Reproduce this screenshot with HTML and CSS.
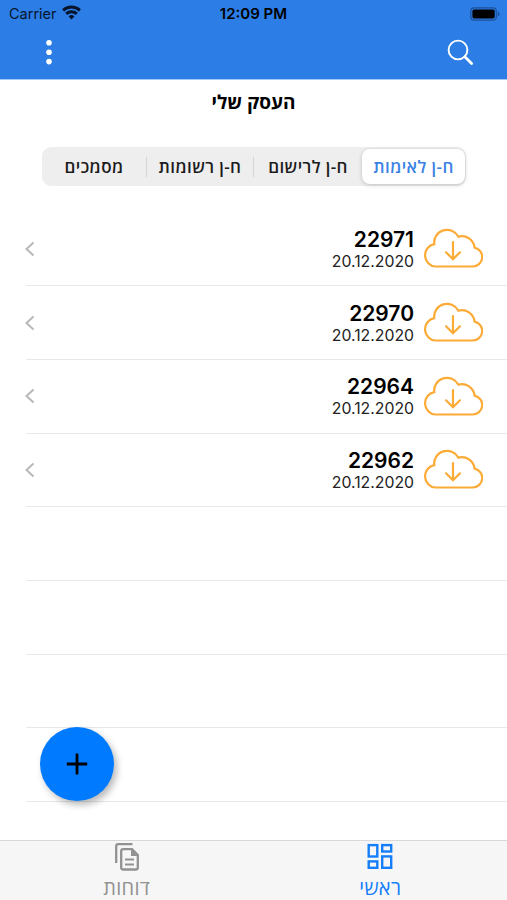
FILE: index.html
```
<!DOCTYPE html>
<html lang="he">
<head>
  <meta charset="UTF-8" />
  <meta name="viewport" content="width=device-width, initial-scale=1.0"/>
  <title>העסק שלי</title>
  <link rel="stylesheet" href="styles.css">
</head>
<body>
  <svg width="0" height="0" class="defs">
    <symbol id="cloud" viewBox="0 0 60 41">
      <path d="M12.5 38.5 A11.25 11.25 0 0 1 11.3 16.2 A12.8 12.8 0 0 1 35.3 8.6 A12.9 12.9 0 0 1 51.6 19.6 A9.55 9.55 0 0 1 49.5 38.5 Z"/>
      <path d="M30 14 V31 M23 24.3 L30 31.2 L37 24.3"/>
    </symbol>
    <symbol id="chevron" viewBox="0 0 10 16">
      <path d="M8.5 1.5 L1.5 8 L8.5 14.5"/>
    </symbol>
  </svg>

  <header>
    <div class="status">
      <div class="carrier">
        <span>Carrier</span>
        <svg width="19" height="15" viewBox="0 0 19 15" fill="none" stroke="#06152c" stroke-width="2.9">
          <path d="M1.1 5.4 A12.2 12.2 0 0 1 17.9 5.4"/>
          <path d="M4.2 8.9 A7.8 7.8 0 0 1 14.8 8.9"/>
          <path d="M9.5 14.4 L6.6 11.4 A4.2 4.2 0 0 1 12.4 11.4 Z" fill="#06152c" stroke="none"/>
        </svg>
      </div>
      <div class="time">12:09 PM</div>
      <svg class="battery" width="31" height="14" viewBox="0 0 31 14">
        <rect x="0.8" y="0.8" width="25.5" height="12.4" rx="3.5" fill="none" stroke="#1c509a" stroke-width="1.2"/>
        <rect x="2.4" y="2.4" width="22.3" height="9.2" rx="1.8" fill="#000"/>
        <path d="M27.8 4.6 Q29.6 5.4 29.6 7 Q29.6 8.6 27.8 9.4 Z" fill="#1c509a"/>
      </svg>
    </div>
    <div class="nav">
      <svg width="8" height="26" viewBox="0 0 8 26" fill="#fff">
        <circle cx="4" cy="3.7" r="2.8"/>
        <circle cx="4" cy="13.2" r="2.8"/>
        <circle cx="4" cy="22.6" r="2.8"/>
      </svg>
      <svg width="27" height="27" viewBox="0 0 27 27" fill="none" stroke="#fff">
        <circle cx="11" cy="11" r="9.4" stroke-width="1.9"/>
        <path d="M17.8 17.8 L24.6 24.4" stroke-width="2.8" stroke-linecap="round"/>
      </svg>
    </div>
  </header>

  <main>
    <h1 dir="rtl">העסק שלי</h1>
    <div class="tabs" dir="rtl">
      <button class="active"><span>ח-ן לאימות</span></button>
      <button><span>ח-ן לרישום</span></button>
      <button><span>ח-ן רשומות</span></button>
      <button><span>מסמכים</span></button>
    </div>

    <div class="list">
      <div class="row">
        <svg class="chevron"><use href="#chevron"/></svg>
        <div class="info"><b>22971</b><span>20.12.2020</span></div>
        <svg class="cloud"><use href="#cloud"/></svg>
      </div>
      <div class="row">
        <svg class="chevron"><use href="#chevron"/></svg>
        <div class="info"><b>22970</b><span>20.12.2020</span></div>
        <svg class="cloud"><use href="#cloud"/></svg>
      </div>
      <div class="row">
        <svg class="chevron"><use href="#chevron"/></svg>
        <div class="info"><b>22964</b><span>20.12.2020</span></div>
        <svg class="cloud"><use href="#cloud"/></svg>
      </div>
      <div class="row">
        <svg class="chevron"><use href="#chevron"/></svg>
        <div class="info"><b>22962</b><span>20.12.2020</span></div>
        <svg class="cloud"><use href="#cloud"/></svg>
      </div>
      <div class="row"></div>
      <div class="row"></div>
      <div class="row"></div>
      <div class="row"></div>
    </div>
  </main>

  <button class="add">
    <svg width="22" height="22" viewBox="0 0 22 22" stroke="#000" stroke-width="2.8">
      <path d="M11 0.5 V21.5 M0.8 11 H21.2"/>
    </svg>
  </button>

  <footer>
    <div class="item">
      <svg width="26" height="30" viewBox="0 0 26 30" fill="none" stroke="#929292" stroke-width="2.3">
        <path d="M2.2 21 V4.2 Q2.2 2.2 4.2 2.2 H18.5"/>
        <path d="M9.2 7.2 H18 L23.8 13 V25.5 Q23.8 27.5 21.8 27.5 H9.2 Q7.2 27.5 7.2 25.5 V9.2 Q7.2 7.2 9.2 7.2 Z"/>
        <path d="M17 7 L24 14 H17 Z" fill="#929292" stroke="none"/>
        <path d="M11 17.4 H20 M11 22.4 H20" stroke-width="2"/>
      </svg>
      <span>דוחות</span>
    </div>
    <div class="item active">
      <svg width="26" height="30" viewBox="0 0 26 30" fill="none" stroke="#157efb" stroke-width="2.4">
        <rect x="1.7" y="3.1" width="8.6" height="11.4"/>
        <rect x="15.2" y="3.1" width="9" height="6.4"/>
        <rect x="1.7" y="19.4" width="8.6" height="6.4"/>
        <rect x="15.2" y="14.4" width="9" height="11.4"/>
      </svg>
      <span>ראשי</span>
    </div>
  </footer>
</body>
</html>
```
FILE: styles.css
```
* {
  box-sizing: border-box;
}

body {
  margin: 0;
  height: 900px;
  display: flex;
  flex-direction: column;
  font-family: Inter, "Open Sans", sans-serif;
  background: #fff;
  color: #000;
  overflow: hidden;
}

button {
  border: none;
  padding: 0;
  background: none;
  font-family: "Open Sans", sans-serif;
}

svg {
  display: block;
}

.defs {
  position: absolute;
}

header {
  height: 80px;
  background: #2c7de5;
  border-bottom: 1px solid #a3c8f6;
}

.status {
  display: grid;
  grid-template-columns: 1fr auto 1fr;
  align-items: center;
  height: 27px;
  padding: 0 6px 0 9px;
  font-size: 14.5px;
}

.carrier {
  display: flex;
  align-items: center;
  gap: 5px;
  color: #06152c;
}

.carrier svg {
  margin-top: -3px;
}

.time {
  font-weight: 600;
  font-size: 15px;
  margin-right: 3px;
}

.battery {
  justify-self: end;
}

.nav {
  display: flex;
  justify-content: space-between;
  align-items: center;
  height: 50px;
  padding: 0 33px 0 45px;
}

main {
  flex: 1;
}

h1 {
  margin: 9px 0 0;
  height: 26px;
  line-height: 26px;
  font-family: "Open Sans", sans-serif;
  font-size: 19px;
  font-weight: 700;
  text-align: center;
}

.tabs {
  display: grid;
  grid-template-columns: 104px 108px 107px 105px;
  width: 424px;
  height: 39px;
  margin: 32px 0 0 42px;
  padding: 2px 0;
  border-radius: 9px;
  background: #eeeeef;
}

.tabs button {
  display: flex;
  align-items: center;
  justify-content: center;
  font-size: 17px;
  font-weight: 600;
  letter-spacing: 0.4px;
  color: #1c1c1c;
}

.tabs button + button + button::before {
  content: "";
  width: 1px;
  height: 20px;
  margin-left: auto;
  background: #d6d6d8;
}

.tabs button + button + button span {
  margin-left: auto;
}

.tabs .active {
  margin: 0 1px 0 0;
  border-radius: 8px;
  background: #fff;
  color: #3b82e4;
  box-shadow: 0 1px 4px rgba(0, 0, 0, 0.2);
}

.list {
  margin: 26.5px 0 0 26px;
}

.row {
  display: flex;
  align-items: center;
  height: 73.7px;
  padding-right: 24px;
  border-bottom: 1px solid #e8e8e8;
}

.chevron {
  width: 10px;
  height: 16px;
  margin-left: -1px;
  fill: none;
  stroke: #b8b8b8;
  stroke-width: 2;
}

.info {
  display: flex;
  flex-direction: column;
  align-items: flex-end;
  margin-left: auto;
  padding-top: 2px;
}

.info b {
  font-size: 21px;
  line-height: 23px;
  font-weight: 600;
}

.info span {
  font-size: 15.8px;
  line-height: 21px;
  color: #222;
}

.cloud {
  width: 60px;
  height: 41px;
  margin-left: 9px;
  fill: none;
  stroke: #fcab37;
  stroke-width: 2.2;
  stroke-linecap: round;
}

/* floating button over the list */
.add {
  position: absolute;
  left: 40px;
  bottom: 99px;
  width: 74px;
  height: 74px;
  display: flex;
  align-items: center;
  justify-content: center;
  border-radius: 50%;
  background: #007bff;
  box-shadow: 3px 4px 7px rgba(0, 0, 0, 0.28);
}

footer {
  display: grid;
  grid-template-columns: 1fr 1fr;
  height: 60px;
  border-top: 1px solid #d9d9d9;
  background: #f7f6f7;
}

.item {
  display: flex;
  flex-direction: column;
  align-items: center;
  padding-top: 1px;
  font-family: "Open Sans", sans-serif;
  font-size: 20px;
  font-weight: 500;
  line-height: 32px;
  letter-spacing: 0.3px;
  color: #929292;
}

.item.active {
  color: #157efb;
}
```
